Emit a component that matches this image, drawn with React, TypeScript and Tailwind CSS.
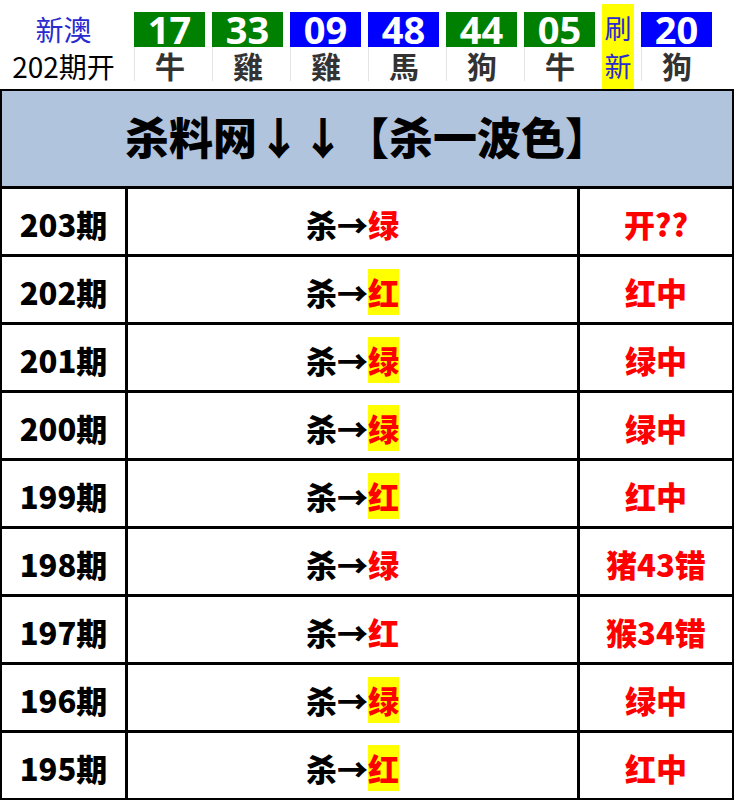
import React from 'react'

const balls = [
  { n: '17', z: '牛', c: 'bg-[#008000]' },
  { n: '33', z: '雞', c: 'bg-[#008000]' },
  { n: '09', z: '雞', c: 'bg-[#0000ff]' },
  { n: '48', z: '馬', c: 'bg-[#0000ff]' },
  { n: '44', z: '狗', c: 'bg-[#008000]' },
  { n: '05', z: '牛', c: 'bg-[#008000]' },
]

const rows = [
  { qi: '203期', color: '绿', mark: false, res: '开??' },
  { qi: '202期', color: '红', mark: true, res: '红中' },
  { qi: '201期', color: '绿', mark: true, res: '绿中' },
  { qi: '200期', color: '绿', mark: true, res: '绿中' },
  { qi: '199期', color: '红', mark: true, res: '红中' },
  { qi: '198期', color: '绿', mark: false, res: '猪43错' },
  { qi: '197期', color: '红', mark: false, res: '猴34错' },
  { qi: '196期', color: '绿', mark: true, res: '绿中' },
  { qi: '195期', color: '红', mark: true, res: '红中' },
]

function Ball({ n, z, c }: { n: string; z: string; c: string }) {
  return (
    <div className="w-[71px] flex flex-col pt-[12px]">
      <div className={`${c} h-[35px] flex items-center justify-center text-white font-bold text-[38px] leading-[35px] font-['Open_Sans']`}>
        {n}
      </div>
      <div className="h-[34px] pt-[2px] border-l border-[#e4e4e4] flex items-center justify-center text-[#333] font-bold text-[30px] leading-[32px]">
        {z}
      </div>
    </div>
  )
}

export default function App() {
  return (
    <div className="w-[734px] bg-white font-['Noto_Sans_CJK_SC',sans-serif]">
      {/* top draw bar */}
      <div className="h-[89px] flex gap-[7px]">
        <div className="w-[127px] flex flex-col items-center pt-[11px]">
          <span className="text-[#2a2ad0] text-[28px] leading-[37px]">新澳</span>
          <span className="text-black text-[28px] leading-[37px]">202期开</span>
        </div>
        {balls.map((b, i) => (
          <Ball key={i} {...b} />
        ))}
        <div className="w-[32px] mt-[4px] h-[85px] bg-[#ffff00] flex flex-col items-center justify-center text-[#2a2ad0] text-[27px] leading-[38px]">
          <span>刷</span>
          <span>新</span>
        </div>
        <Ball n="20" z="狗" c="bg-[#0000ff]" />
      </div>

      <div className="border-2 border-black">
        <div className="h-[95px] pb-[6px] bg-[#b0c4de] flex items-center justify-center text-black font-black text-[44px] leading-none">
          杀料网↓↓【杀一波色】
        </div>
        {rows.map((r) => (
          <div key={r.qi} className="grid grid-cols-[123px_452px_1fr] h-[68px] border-t-[3px] border-black font-black text-[31px]">
            <div className="pt-[5px] flex items-center justify-center text-black">{r.qi}</div>
            <div className="pt-[5px] border-l-[3px] border-black flex items-center justify-center text-black">
              杀→<span className={`text-[#ff0000] ${r.mark ? 'bg-[#ffff00]' : ''}`}>{r.color}</span>
            </div>
            <div className="pt-[5px] border-l-[3px] border-black flex items-center justify-center text-[#ff0000]">{r.res}</div>
          </div>
        ))}
      </div>
    </div>
  )
}
